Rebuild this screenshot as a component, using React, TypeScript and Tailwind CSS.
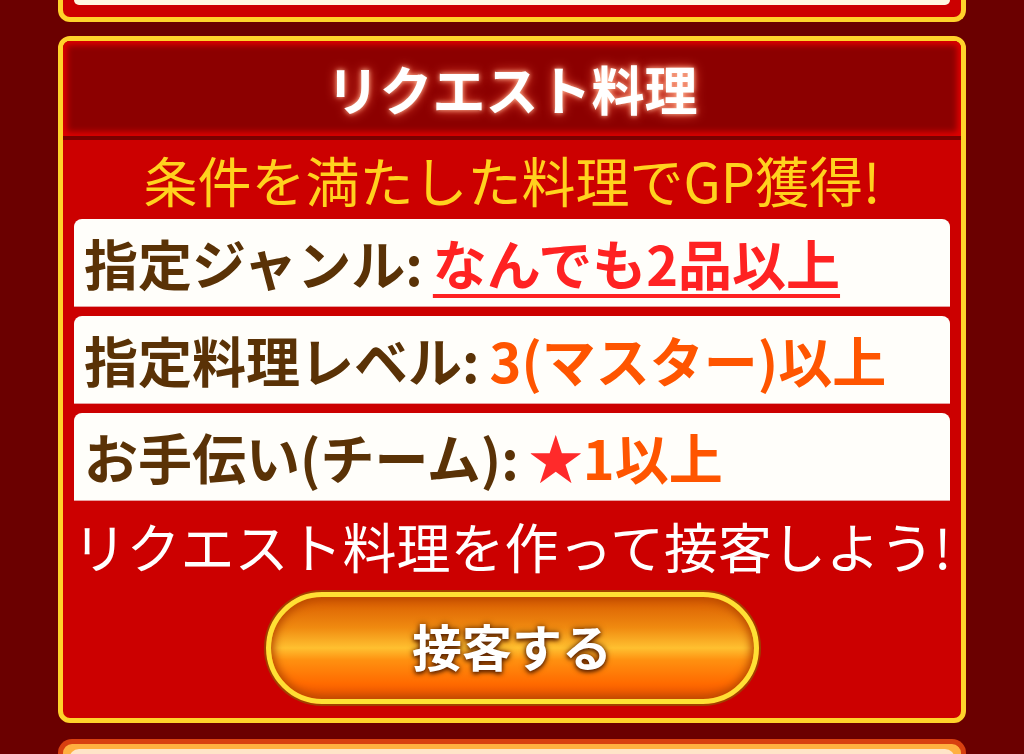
const font = '[font-family:"Noto_Sans_CJK_JP","Noto_Sans",sans-serif]';

type Row = { label: string; value: React.ReactNode };

const rows: Row[] = [
  {
    label: '指定ジャンル:',
    value: (
      <span className="text-[#ff2222] underline decoration-[4px] underline-offset-[8px]">なんでも2品以上</span>
    ),
  },
  {
    label: '指定料理レベル:',
    value: <span className="text-[#ff5500]">3(マスター)以上</span>,
  },
  {
    label: 'お手伝い(チーム):',
    value: (
      <span className="text-[#ff5500]">
        <span className="text-[#ff2a2a]">★</span>1以上
      </span>
    ),
  },
];

export default function App() {
  return (
    <div className={`min-h-[754px] bg-[#6b0000] overflow-hidden ${font}`}>
      {/* previous card (cut off) */}
      <div className="mx-[58px] h-[22px] rounded-b-[12px] border-x-[5px] border-b-[5px] border-[#ffd22a] bg-[#cc0000] px-[11px]">
        <div className="h-[5px] rounded-b-[6px] bg-[#fff8e0]" />
      </div>

      {/* request card */}
      <div className="mx-[58px] mt-[14px] rounded-[12px] border-[5px] border-[#ffd22a] bg-[#cc0000] overflow-hidden">
        <div className="flex h-[99px] items-center justify-center border-b-[4px] border-[#7a0000] bg-[#8c0000] shadow-[inset_0_0_6px_4px_#e00000]">
          <span className="text-[53px] font-bold leading-none text-white [text-shadow:0_0_5px_#ffc0a0,0_0_12px_#ff6040]">
            リクエスト料理
          </span>
        </div>

        <div className="flex h-[79px] items-center justify-center">
          <span className="text-[54px] leading-none text-[#ffd21e]">条件を満たした料理でGP獲得!</span>
        </div>

        <div className="flex flex-col gap-[10px] px-[11px]">
          {rows.map((row) => (
            <div
              key={row.label}
              className="flex h-[87px] items-center rounded-t-[8px] bg-[#fffefa] px-[10px] text-[54px] font-bold leading-none text-[#5a3206] shadow-[0_1px_0_#e8a0a0]"
            >
              <span>{row.label}</span>
              <span className="ml-[10px]">{row.value}</span>
            </div>
          ))}
        </div>

        <div className="flex h-[92px] items-center justify-center">
          <span className="text-[54px] leading-none text-white">リクエスト料理を作って接客しよう!</span>
        </div>

        <div className="flex justify-center pb-[14px]">
          <div className="flex h-[112px] w-[493px] items-center justify-center rounded-full border-[5px] border-[#ffe034] bg-[linear-gradient(to_bottom,#d85a00_0%,#f08a10_30%,#ffc030_50%,#ff9010_62%,#ff6a00_85%,#e85000_100%)] shadow-[0_0_0_2px_#a04000,inset_0_0_8px_3px_#b84a00]">
            <span className="-mt-[6px] text-[50px] font-bold leading-none text-white [text-shadow:0_2px_4px_#5a2000,0_0_6px_#6a3000]">
              接客する
            </span>
          </div>
        </div>
      </div>

      {/* next card (cut off) */}
      <div className="mx-[58px] mt-[16px] h-[40px] rounded-t-[14px] border-x-[5px] border-t-[5px] border-[#d84010] bg-[#ffb040] px-[6px] pt-[5px]">
        <div className="h-full rounded-t-[10px] bg-[#ffe4c8]" />
      </div>
    </div>
  );
}
